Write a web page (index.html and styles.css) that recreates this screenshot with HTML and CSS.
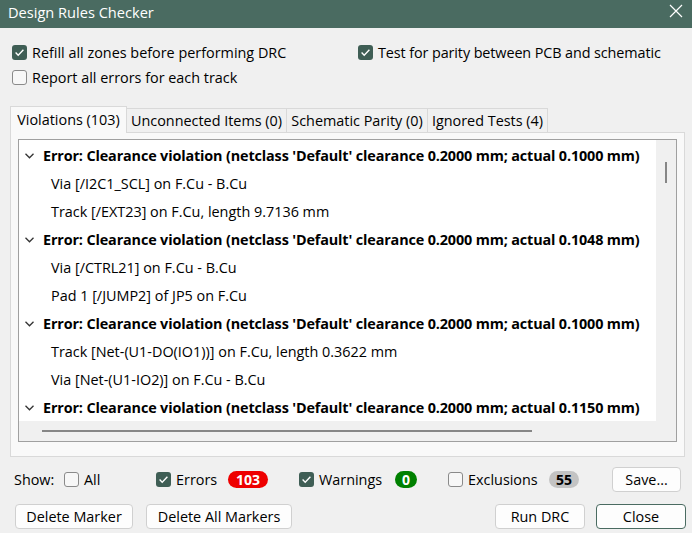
FILE: index.html
```html
<!DOCTYPE html>
<html>
<head>
<meta charset="utf-8">
<title>Design Rules Checker</title>
<link rel="stylesheet" href="styles.css">
</head>
<body>
<div class="titlebar">
  <span class="title">Design Rules Checker</span>
  <svg class="close-x" width="14" height="14" viewBox="0 0 14 14"><path d="M1 1L13 13M13 1L1 13" stroke="#fff" stroke-width="1.2" fill="none"/></svg>
</div>

<div class="options">
  <div class="check"><span class="box on"><svg width="15" height="15" viewBox="0 0 15 15"><polyline points="3.6,7.6 6.2,10.2 11.4,4.8" stroke="#fff" stroke-width="1.4" fill="none"/></svg></span><span>Refill all zones before performing DRC</span></div>
  <div class="check"><span class="box on"><svg width="15" height="15" viewBox="0 0 15 15"><polyline points="3.6,7.6 6.2,10.2 11.4,4.8" stroke="#fff" stroke-width="1.4" fill="none"/></svg></span><span>Test for parity between PCB and schematic</span></div>
  <div class="check"><span class="box off"></span><span>Report all errors for each track</span></div>
</div>

<div class="notebook">
  <div class="tabs">
    <div class="tab active">Violations (103)</div>
    <div class="tab">Unconnected Items (0)</div>
    <div class="tab">Schematic Parity (0)</div>
    <div class="tab">Ignored Tests (4)</div>
  </div>
  <div class="panel">
    <div class="listbox">
      <div class="list-main">
        <div class="list-content">
          <div class="row err"><svg class="chev" width="9" height="6" viewBox="0 0 9 6"><polyline points="0.5,0.8 4.5,4.8 8.5,0.8" stroke="#333" stroke-width="1.3" fill="none"/></svg>Error: Clearance violation (netclass 'Default' clearance 0.2000 mm; actual 0.1000 mm)</div>
          <div class="row item">Via [/I2C1_SCL] on F.Cu - B.Cu</div>
          <div class="row item">Track [/EXT23] on F.Cu, length 9.7136 mm</div>
          <div class="row err"><svg class="chev" width="9" height="6" viewBox="0 0 9 6"><polyline points="0.5,0.8 4.5,4.8 8.5,0.8" stroke="#333" stroke-width="1.3" fill="none"/></svg>Error: Clearance violation (netclass 'Default' clearance 0.2000 mm; actual 0.1048 mm)</div>
          <div class="row item">Via [/CTRL21] on F.Cu - B.Cu</div>
          <div class="row item">Pad 1 [/JUMP2] of JP5 on F.Cu</div>
          <div class="row err"><svg class="chev" width="9" height="6" viewBox="0 0 9 6"><polyline points="0.5,0.8 4.5,4.8 8.5,0.8" stroke="#333" stroke-width="1.3" fill="none"/></svg>Error: Clearance violation (netclass 'Default' clearance 0.2000 mm; actual 0.1000 mm)</div>
          <div class="row item">Track [Net-(U1-DO(IO1))] on F.Cu, length 0.3622 mm</div>
          <div class="row item">Via [Net-(U1-IO2)] on F.Cu - B.Cu</div>
          <div class="row err"><svg class="chev" width="9" height="6" viewBox="0 0 9 6"><polyline points="0.5,0.8 4.5,4.8 8.5,0.8" stroke="#333" stroke-width="1.3" fill="none"/></svg>Error: Clearance violation (netclass 'Default' clearance 0.2000 mm; actual 0.1150 mm)</div>
        </div>
        <div class="vscroll"><div class="vthumb"></div></div>
      </div>
      <div class="hscroll"><div class="hthumb"></div></div>
    </div>
  </div>
</div>

<div class="filters">
  <span class="show">Show:</span>
  <div class="check f-all"><span class="box off"></span><span>All</span></div>
  <div class="check f-err"><span class="box on"><svg width="15" height="15" viewBox="0 0 15 15"><polyline points="3.6,7.6 6.2,10.2 11.4,4.8" stroke="#fff" stroke-width="1.4" fill="none"/></svg></span><span>Errors</span></div>
  <span class="badge b-red">103</span>
  <div class="check f-warn"><span class="box on"><svg width="15" height="15" viewBox="0 0 15 15"><polyline points="3.6,7.6 6.2,10.2 11.4,4.8" stroke="#fff" stroke-width="1.4" fill="none"/></svg></span><span>Warnings</span></div>
  <span class="badge b-green">0</span>
  <div class="check f-excl"><span class="box off"></span><span>Exclusions</span></div>
  <span class="badge b-gray">55</span>
  <span class="spacer"></span>
  <button class="btn btn-save">Save...</button>
</div>

<div class="buttons">
  <button class="btn btn-del">Delete Marker</button>
  <button class="btn btn-delall">Delete All Markers</button>
  <span class="spacer"></span>
  <button class="btn btn-run">Run DRC</button>
  <button class="btn btn-close">Close</button>
</div>
</body>
</html>
```

FILE: styles.css
```css
html, body {
  margin: 0;
  padding: 0;
}
body {
  background: #f0f0f0;
  font-family: "Open Sans", "Noto Sans", sans-serif;
  font-size: 14.4px;
  color: #000;
  width: 692px;
  height: 533px;
  overflow: hidden;
}

.titlebar {
  height: 28px;
  background: #4a6b61;
  color: #fff;
  display: flex;
  align-items: flex-start;
  justify-content: space-between;
  padding: 0 9px 0 8px;
}
.title {
  line-height: 18px;
  padding-top: 3px;
  font-size: 14.6px;
}
.close-x {
  margin-top: 4px;
}

.options {
  display: grid;
  grid-template-columns: 346px auto;
  row-gap: 10px;
  padding: 17px 0 0 12px;
}
.options .check:nth-child(2) {
  letter-spacing: -0.1px;
}
.check {
  display: flex;
  align-items: center;
  gap: 5px;
  height: 15px;
  line-height: 15px;
  white-space: nowrap;
}
.box {
  width: 15px;
  height: 15px;
  box-sizing: border-box;
  border-radius: 3px;
  flex: none;
  display: block;
}
.box svg {
  display: block;
}
.box.on {
  background: #3f5e55;
}
.box.off {
  border: 1px solid #8a8a8a;
  background: #f7f7f7;
}

.notebook {
  margin: 21px 7px 0 10px;
}
.tabs {
  display: flex;
  align-items: flex-end;
  height: 26px;
}
.tab {
  height: 24px;
  box-sizing: border-box;
  border: 1px solid #d9d9d9;
  border-bottom: none;
  margin-left: -1px;
  display: flex;
  align-items: center;
  justify-content: center;
  background: #f0f0f0;
  white-space: nowrap;
}
.tab:nth-child(1) { width: 117px; margin-left: 0; }
.tab:nth-child(2) { width: 161px; }
.tab:nth-child(3) { width: 142px; }
.tab:nth-child(4) { width: 121px; }
.tab.active {
  height: 27px;
  margin-bottom: -1px;
  padding-bottom: 2px;
  background: #f9f9f9;
  position: relative;
  z-index: 1;
}

.panel {
  height: 325px;
  box-sizing: border-box;
  border: 1px solid #d9d9d9;
  background: #f9f9f9;
  padding: 6px 7px 14px 7px;
}
.listbox {
  height: 303px;
  box-sizing: border-box;
  border: 1px solid #a0a0a0;
  display: flex;
  flex-direction: column;
  background: #fff;
}
.list-main {
  display: flex;
  height: 281px;
}
.list-content {
  flex: 1;
  overflow: hidden;
  padding-top: 1px;
  background: #fff;
}
.row {
  height: 28px;
  display: flex;
  align-items: center;
  white-space: nowrap;
}
.row.err {
  font-weight: 700;
  padding-left: 6px;
  letter-spacing: -0.14px;
}
.chev {
  flex: none;
  margin-right: 9px;
  margin-top: 1px;
}
.row.item {
  padding-left: 32px;
}
.vscroll {
  width: 20px;
  flex: none;
  background: #f0f0f0;
  box-sizing: border-box;
  padding: 22px 0 0 9px;
}
.vthumb {
  width: 2px;
  height: 21px;
  background: #868686;
}
.hscroll {
  height: 20px;
  background: #f0f0f0;
  box-sizing: border-box;
  padding: 9px 0 0 23px;
}
.hthumb {
  width: 490px;
  height: 2px;
  background: #868686;
}

.filters {
  display: flex;
  align-items: center;
  height: 24px;
  margin-top: 10px;
  padding: 0 11px 0 14px;
}
.show { width: 50px; }
.f-all { width: 92px; }
.f-err { width: 72px; }
.f-warn { width: 96px; }
.f-excl { width: 101px; }
.badge {
  height: 17px;
  border-radius: 9px;
  font-weight: 700;
  font-size: 14px;
  display: flex;
  align-items: center;
  justify-content: center;
  flex: none;
}
.b-red { width: 40px; background: #ee0000; color: #fff; margin-right: 31px; }
.b-green { width: 22px; background: #008000; color: #fff; margin-right: 31px; }
.b-gray { width: 30px; background: #c3c3c3; color: #000; }
.spacer { flex: 1; }

.btn {
  font-family: inherit;
  font-size: 14.4px;
  color: #000;
  height: 25px;
  padding: 0;
  border: 1px solid #d0d0d0;
  border-radius: 4px;
  background: #fdfdfd;
  display: flex;
  align-items: center;
  justify-content: center;
  box-sizing: border-box;
  flex: none;
}
.btn-save { width: 69px; }

.buttons {
  display: flex;
  height: 25px;
  margin-top: 13px;
  padding: 0 6px 0 15px;
}
.btn-del { width: 118px; }
.btn-delall { width: 146px; margin-left: 13px; }
.btn-run { width: 90px; }
.btn-close { width: 90px; margin-left: 11px; border-color: #4a6b61; }
```
